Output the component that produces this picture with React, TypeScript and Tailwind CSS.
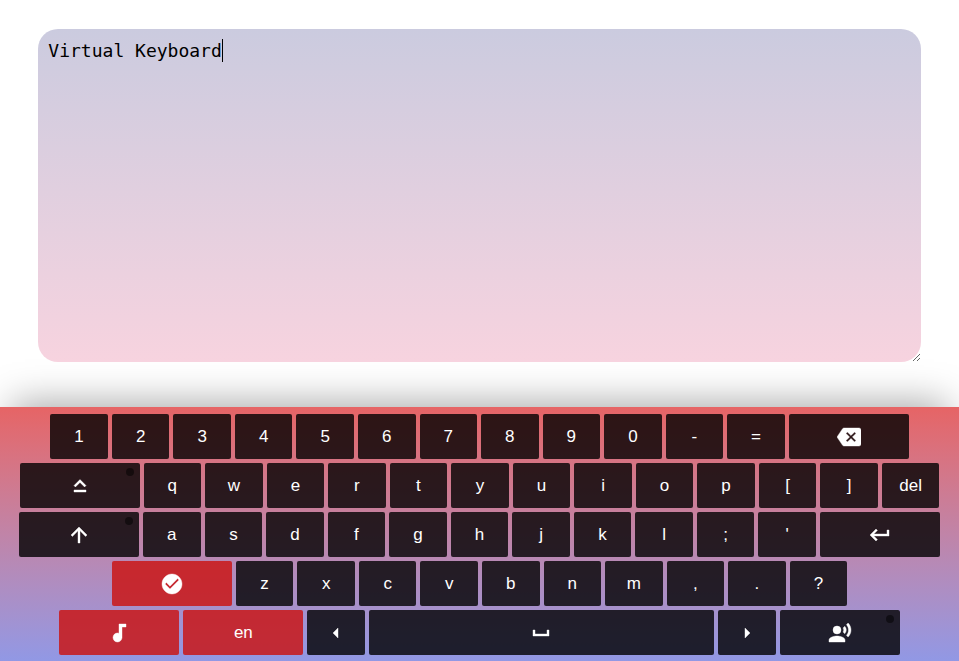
import { useState } from "react";
import type { ReactNode } from "react";
import {
  MdArrowLeft,
  MdArrowRight,
  MdArrowUpward,
  MdAudiotrack,
  MdBackspace,
  MdCheckCircle,
  MdKeyboardCapslock,
  MdKeyboardReturn,
  MdRecordVoiceOver,
  MdSpaceBar,
} from "react-icons/md";

type KeySize = "normal" | "wide" | "space";

type KeyProps = {
  children: ReactNode;
  label?: string;
  size?: KeySize;
  accent?: boolean;
  indicator?: boolean;
  onPress?: () => void;
};

const widths: Record<KeySize, string> = {
  normal: "w-[6%]",
  wide: "w-30",
  space: "w-[36%]",
};

function Key({ children, label, size = "normal", accent = false, indicator = false, onPress }: KeyProps) {
  return (
    <button
      type="button"
      aria-label={label}
      onClick={onPress}
      className={`relative flex h-[45px] shrink-0 cursor-pointer items-center justify-center rounded-xs text-[17px] leading-5 text-white [&_path[fill=none]]:stroke-none ${widths[size]} ${accent ? "bg-[#cc0f0b]/80" : "bg-black/80"}`}
    >
      {children}
      {indicator && <span className="absolute top-[5px] right-[6px] size-2 rounded-full bg-black/50" />}
    </button>
  );
}

function Row({ children }: { children: ReactNode }) {
  return <div className="flex justify-center gap-1">{children}</div>;
}

export default function App() {
  const [text, setText] = useState("Virtual Keyboard");
  const type = (value: string) => setText((current) => current + value);
  const letters = (keys: string) =>
    keys.split("").map((key) => (
      <Key key={key} onPress={() => type(key)}>
        {key}
      </Key>
    ));

  return (
    <div className="flex min-h-screen flex-col bg-white font-['Liberation_Sans',Arial,sans-serif]">
      <main className="relative mx-[4%] mt-[29px] mb-[45px] flex flex-1">
        <textarea
          aria-label="Text"
          value={text}
          onChange={(event) => setText(event.target.value)}
          className="w-full resize rounded-[20px] bg-linear-to-b from-[#cbcbdf] to-[#f7d3df] p-[10px] font-['DejaVu_Sans_Mono',monospace] text-[18px] leading-[23px] text-black caret-transparent outline-none"
        />
        <div
          aria-hidden="true"
          className="pointer-events-none absolute top-[10px] left-[10px] h-[23px] border-r border-black font-['DejaVu_Sans_Mono',monospace] text-[18px] leading-[23px] whitespace-pre text-transparent"
        >
          {text}
        </div>
      </main>
      <section
        aria-label="Keyboard"
        className="flex flex-col gap-1 bg-linear-to-b from-[#e66465] to-[#9198e5] pt-[7px] pb-[6px] shadow-[0_-16px_36px_-12px_rgba(0,0,0,0.35)]"
      >
        <Row>
          {letters("1234567890-=")}
          <Key size="wide" label="Backspace" onPress={() => setText(text.slice(0, -1))}>
            <MdBackspace size={24} strokeWidth={0.4} />
          </Key>
        </Row>
        <Row>
          <Key size="wide" label="Caps lock" indicator>
            <MdKeyboardCapslock size={24} strokeWidth={0.4} />
          </Key>
          {letters("qwertyuiop[]")}
          <Key>del</Key>
        </Row>
        <Row>
          <Key size="wide" label="Shift" indicator>
            <MdArrowUpward size={24} strokeWidth={0.4} />
          </Key>
          {letters("asdfghjkl;'")}
          <Key size="wide" label="Enter" onPress={() => type("\n")}>
            <MdKeyboardReturn size={24} strokeWidth={0.4} />
          </Key>
        </Row>
        <Row>
          <Key size="wide" label="Done" accent>
            <MdCheckCircle size={24} strokeWidth={0.4} />
          </Key>
          {letters("zxcvbnm,.?")}
        </Row>
        <Row>
          <Key size="wide" label="Sound" accent>
            <MdAudiotrack size={24} strokeWidth={0.4} />
          </Key>
          <Key size="wide" accent>
            en
          </Key>
          <Key label="Left">
            <MdArrowLeft size={24} strokeWidth={0.4} />
          </Key>
          <Key size="space" label="Space" onPress={() => type(" ")}>
            <MdSpaceBar size={24} strokeWidth={0.4} />
          </Key>
          <Key label="Right">
            <MdArrowRight size={24} strokeWidth={0.4} />
          </Key>
          <Key size="wide" label="Voice input" indicator>
            <MdRecordVoiceOver size={24} strokeWidth={0.4} />
          </Key>
        </Row>
      </section>
    </div>
  );
}
